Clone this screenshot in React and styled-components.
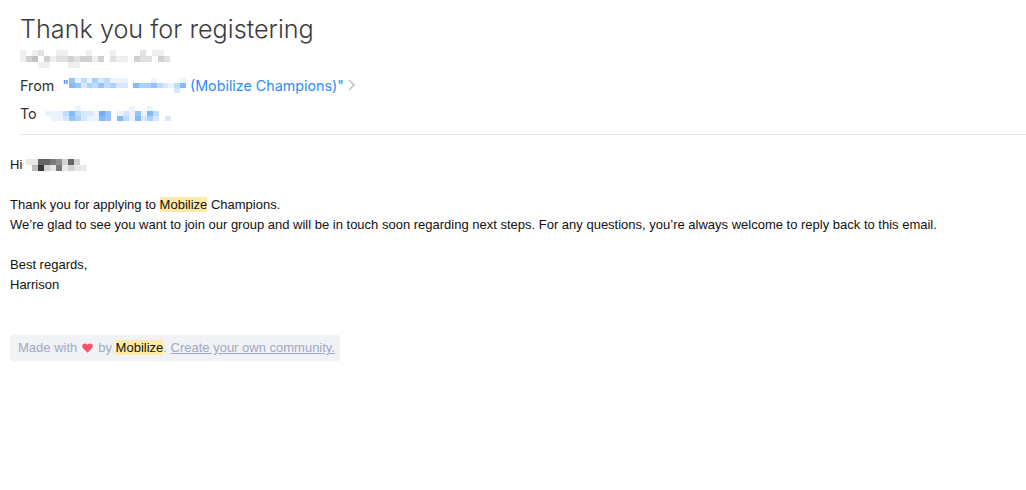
import React from "react";
import styled, { createGlobalStyle } from "styled-components";

const GlobalStyle = createGlobalStyle`
  html, body {
    margin: 0;
    padding: 0;
    background: #fff;
  }
`;

// mosaic that hides names and addresses. each digit is one cell, 0 = empty, 9 = strongest
const senderName = [
  "10120011000100010000201100",
  "13403122323313021103220320",
  "00011000110000000000000000",
];
const senderMail = [
  "51314231110000100001",
  "65243534220644532136",
  "00000000000000000020",
];
const recipient = [
  "00000100000000100100000",
  "11136322175012151630000",
  "01125421165063162420200",
];
const greetingName = [
  "117765272",
  "0392161211",
];

const Mosaic = ({ rows, color, cellW = 6, cellH = 6 }) => {
  const width = Math.max(...rows.map((r) => r.length)) * cellW;
  const height = rows.length * cellH;
  return (
    <svg width={width} height={height} viewBox={`0 0 ${width} ${height}`} shapeRendering="crispEdges">
      {rows.map((row, y) =>
        row.split("").map((d, x) =>
          d === "0" ? null : (
            <rect key={`${x}-${y}`} x={x * cellW} y={y * cellH} width={cellW} height={cellH} fill={color} opacity={Number(d) / 10} />
          )
        )
      )}
    </svg>
  );
};

const App = () => (
  <Page>
    <GlobalStyle />
    <Header>
      <Subject>Thank you for registering</Subject>
      <SenderLine>
        <Mosaic rows={senderName} color="#666" />
      </SenderLine>
      <MetaRow>
        <MetaLabel>From</MetaLabel>
        <MetaLink>
          "<Mosaic rows={senderMail} color="#2f8cf5" cellW={5.85} cellH={5} /> (Mobilize Champions)"
        </MetaLink>
        <Chevron width="7" height="12" viewBox="0 0 7 12">
          <path d="M1 1l5 5-5 5" fill="none" stroke="#b9b9b9" strokeWidth="1.3" />
        </Chevron>
      </MetaRow>
      <MetaRow>
        <MetaLabel>To</MetaLabel>
        <MetaLink>
          <Mosaic rows={recipient} color="#2f8cf5" cellH={5} />
        </MetaLink>
      </MetaRow>
    </Header>
    <Body>
      <Para>
        <Greeting>
          Hi <Mosaic rows={greetingName} color="#222" />
        </Greeting>
      </Para>
      <Para>
        Thank you for applying to <Mark>Mobilize</Mark> Champions.
        <br />
        We’re glad to see you want to join our group and will be in touch soon regarding next steps. For any questions, you’re always welcome to reply back to this email.
      </Para>
      <Para>
        Best regards,
        <br />
        Harrison
      </Para>
      <Footer>
        Made with
        <Heart width="11" height="10" viewBox="0 0 12 11">
          <path d="M6 10.6 1.2 5.9C-.2 4.5-.1 2.4 1.2 1.2 2.6 0 4.6.2 6 1.9 7.4.2 9.4 0 10.8 1.2c1.3 1.2 1.4 3.3 0 4.7L6 10.6z" fill="#f4516c" />
        </Heart>
        by <Mark>Mobilize</Mark>. <FooterLink>Create your own community.</FooterLink>
      </Footer>
    </Body>
  </Page>
);

const Page = styled.div`
  width: 1026px;
  height: 490px;
  overflow: hidden;
  background: #fff;
  font-family: "Liberation Sans", Arial, sans-serif;
`;

const Header = styled.header`
  margin-left: 20px;
  padding-top: 13px;
  height: 121px;
  border-bottom: 1px solid #e6e6e6;
`;

const Subject = styled.h1`
  margin: 0;
  font-family: Inter, "Liberation Sans", sans-serif;
  font-size: 25.2px;
  line-height: 32px;
  font-weight: 300;
  color: #3c3c3c;
`;

const SenderLine = styled.div`
  height: 16px;
  margin: 5px 0;
  svg {
    display: block;
  }
`;

const MetaRow = styled.div`
  display: flex;
  align-items: center;
  height: 28px;
  font-family: Inter, "Liberation Sans", sans-serif;
  font-size: 14.3px;
  font-weight: 400;
`;

const MetaLabel = styled.span`
  color: #333;
  margin-right: 8px;
`;

const MetaLink = styled.span`
  display: inline-flex;
  align-items: center;
  color: #2f8cf5;
  white-space: pre;
`;

const Chevron = styled.svg`
  margin-left: 4px;
`;

const Body = styled.div`
  padding: 20px 10px 0;
  font-size: 13px;
  line-height: 20px;
  color: #111;
`;

const Para = styled.p`
  margin: 0 0 20px;
`;

const Greeting = styled.span`
  display: inline-flex;
  align-items: center;
  white-space: pre;
`;

const Mark = styled.span`
  background: #ffeaa5;
  color: #111;
`;

const Footer = styled.div`
  display: inline-block;
  margin-top: 20px;
  padding: 3px 5px 3px 8px;
  border-radius: 3px;
  background: #f1f2f6;
  color: #a3a9c0;
  font-size: 13px;
`;

const Heart = styled.svg`
  margin: 0 5px;
  vertical-align: -1px;
`;

const FooterLink = styled.span`
  text-decoration: underline;
`;

export default App;
